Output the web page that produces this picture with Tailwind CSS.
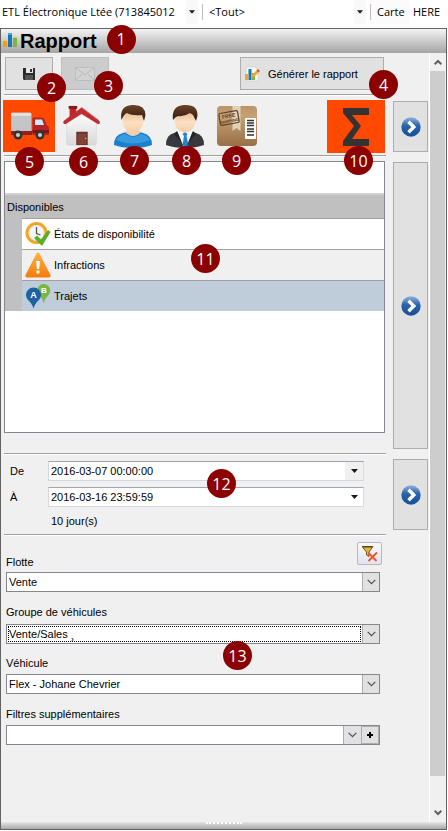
<!DOCTYPE html>
<html lang="fr">
<head>
  <meta charset="UTF-8">
  <meta name="viewport" content="width=device-width, initial-scale=1.0">
  <title>Rapport</title>
  <script src="https://cdn.jsdelivr.net/npm/@tailwindcss/browser@4"></script>
</head>
<body class="bg-white text-black font-['Liberation_Sans',Arial,sans-serif] text-[11px] leading-4 min-h-screen flex flex-col">
  <!-- Formes partagées -->
  <svg class="absolute size-0" aria-hidden="true">
    <defs>
      <linearGradient id="blueBall" x1="0" y1="0" x2="0" y2="1">
        <stop offset="0" stop-color="#8fb0dc"/><stop offset=".45" stop-color="#2862a8"/><stop offset="1" stop-color="#164f96"/>
      </linearGradient>
      <linearGradient id="skin" x1="0" y1="0" x2="0" y2="1">
        <stop offset="0" stop-color="#e9a878"/><stop offset=".6" stop-color="#fbe0c4"/><stop offset="1" stop-color="#f3cda4"/>
      </linearGradient>
      <linearGradient id="hair" x1="0" y1="0" x2="0" y2="1">
        <stop offset="0" stop-color="#6b4428"/><stop offset="1" stop-color="#2e190d"/>
      </linearGradient>
      <symbol id="next" viewBox="0 0 20 20">
        <circle cx="10" cy="10" r="9.7" fill="url(#blueBall)"/>
        <path d="M7.5 4.8 12.8 10l-5.3 5.2" fill="none" stroke="#fff" stroke-width="3.4"/>
      </symbol>
      <symbol id="chevron" viewBox="0 0 9 6">
        <path d="M.7 .9 4.5 4.7 8.3 .9" fill="none" stroke="#505050" stroke-width="1.2"/>
      </symbol>
      <symbol id="caret" viewBox="0 0 7 4"><path d="M0 0h7L3.5 4z" fill="#1a1a24"/></symbol>
    </defs>
  </svg>

  <!-- Barre du haut -->
  <div class="flex items-center h-6 font-['Open_Sans',sans-serif] mb-1 shrink-0">
    <div class="relative w-[202px] h-6 flex items-center">
      <select aria-label="Compagnie" class="appearance-none w-full h-full pl-0.5 pr-5 bg-white outline-none">
        <option>ETL Électronique Ltée (713845012</option>
      </select>
      <span class="absolute right-1 h-full w-3 bg-[#fafafa] pointer-events-none flex items-center justify-center"><svg class="w-[6px] h-1"><use href="#caret"/></svg></span>
    </div>
    <div class="w-px h-4 bg-[#bdbdbd]"></div>
    <div class="relative flex-1 h-6 flex items-center">
      <select aria-label="Flotte active" class="appearance-none w-full h-full pl-1.5 pr-6 bg-white outline-none">
        <option>&lt;Tout&gt;</option>
      </select>
      <span class="absolute right-1 h-full w-3 bg-[#fafafa] pointer-events-none flex items-center justify-center"><svg class="w-[6px] h-1"><use href="#caret"/></svg></span>
    </div>
    <div class="w-px h-4 bg-[#bdbdbd]"></div>
    <div class="bg-[#fbfbfb] h-6 pl-1.5 w-[38px] flex items-center">Carte</div>
    <div class="pl-1 w-[39px]">HERE</div>
  </div>

  <!-- Fenêtre du rapport -->
  <main class="flex-1 flex flex-col bg-[#f0f0f0] border border-[#636363] mr-px mb-px">
    <header class="h-6 flex items-center gap-0.5 bg-linear-to-b from-[#f4f4f4] to-[#a8a8a8] border-b border-[#a8a8a8]">
      <svg class="w-[15px] h-[15px] ml-0.5" viewBox="0 0 15 15">
        <path d="M0 7h4v7H0z" fill="#f59d18"/><path d="M0 7h4v1H0z" fill="#fbc96c"/>
        <path d="M5 0h4v14H5z" fill="#1477b8"/><path d="M5 0h4v2H5z" fill="#4aa4dc"/>
        <path d="M10 4h4v10h-4z" fill="#7cb342"/><path d="M10 4h4v1h-4z" fill="#b2d97e"/>
      </svg>
      <h1 class="font-bold text-[20px] leading-6">Rapport</h1>
      <div class="relative">
        <span class="absolute left-2 -top-4 z-10 size-[29px] rounded-full bg-[#8b0000] text-white font-['Open_Sans',sans-serif] text-base flex items-center justify-center">1</span>
      </div>
    </header>

    <div class="flex-1 flex">
      <div class="flex-1 min-w-0 pl-[3px] pr-px border-r border-white">
        <!-- Actions -->
        <div class="flex gap-2 pt-1 pl-px pr-11 h-[41px]">
          <button aria-label="Enregistrer" class="relative w-12 h-[33px] bg-[#e1e1e1] border border-[#adadad] flex items-center justify-center">
            <svg class="w-3 h-3" viewBox="0 0 12 12">
              <path d="M0 0h12v12H1L0 11z" fill="#2b2b2b"/><path d="M3 0h7v5H3z" fill="#e8e8e8"/><path d="M7 1h2v3H7z" fill="#333"/><path d="M2 7h8v5H2z" fill="#555"/>
            </svg>
            <span class="absolute left-[31px] top-[15px] z-10 size-[29px] rounded-full bg-[#8b0000] text-white font-['Open_Sans',sans-serif] text-base flex items-center justify-center">2</span>
          </button>
          <button aria-label="Envoyer" class="relative w-12 h-[33px] bg-[#cccccc] border border-[#bfbfbf] flex items-center justify-center">
            <svg class="w-5 h-[14px]" viewBox="0 0 20 14">
              <path d="M.5 .5h19v13H.5z" fill="#d3d3d3" stroke="#bdbdbd"/><path d="m1 1 9 7 9-7M1 13l6-6M19 13l-6-6" fill="none" stroke="#b8b8b8"/>
            </svg>
            <span class="absolute left-8 top-[13px] z-10 size-[29px] rounded-full bg-[#8b0000] text-white font-['Open_Sans',sans-serif] text-base flex items-center justify-center">3</span>
          </button>
          <button class="relative ml-auto w-36 h-[33px] bg-[#e1e1e1] border border-[#adadad] flex items-center gap-2 pl-[3px]">
            <svg class="w-4 h-4" viewBox="0 0 16 16">
              <path d="M2 1h9l3 3v11H2z" fill="#f7f7f7" stroke="#c8c8c8" stroke-width=".6"/>
              <path d="M1 8h3v6H1z" fill="#f5a623"/><path d="M4.500 3h3v11h-3z" fill="#1477b8"/><path d="M8 7h3v7H8z" fill="#7cb342"/>
              <path d="m7 12 1-3 5-5 2 2-5 5z" fill="#f2a33a"/><path d="m12.500 4.500 1.500-1.500 2 2-1.500 1.500z" fill="#d8553a"/>
            </svg>
            Générer le rapport
            <span class="absolute left-32 top-3 z-10 size-[29px] rounded-full bg-[#8b0000] text-white font-['Open_Sans',sans-serif] text-base flex items-center justify-center">4</span>
          </button>
        </div>
        <div class="border-t border-[#a0a0a0] h-0.5 bg-white mr-[42px]"></div>

        <!-- Type de rapport -->
        <div class="flex gap-[7px]">
          <div class="flex-1 min-w-0">
            <div class="flex h-[59px] pt-1 pr-px gap-[3px]">
              <button aria-label="Véhicules" class="relative w-[52px] h-[52px] -ml-px bg-[#ff4800] flex items-center justify-center">
                <svg class="w-10 h-10" viewBox="0 0 40 40">
                  <path d="M2 7.500q0-1 1-1h18q1.500 0 1.500 1.500v19H2z" fill="#c3c5c7"/><path d="M2 7h20v3H2z" fill="#dfe0e1"/>
                  <path d="M2 25h21v4H2z" fill="#8f2020"/>
                  <path d="M23.500 13q0-1.500 1.500-1.500h8q2 0 3 3l1.500 4.500q2.500 1 2.500 3v7H23.500z" fill="#b32428"/>
                  <path d="M26 13.500h7l2 5.500h-9z" fill="#ccebf8"/><path d="M23.500 24h16.500v3H23.500z" fill="#7c1518"/>
                  <circle cx="9" cy="29" r="4.500" fill="#333"/><circle cx="9" cy="29" r="2" fill="#cfcfcf"/>
                  <circle cx="31" cy="29" r="4.500" fill="#333"/><circle cx="31" cy="29" r="2" fill="#cfcfcf"/>
                </svg>
                <span class="absolute left-3 top-[47px] z-10 size-[29px] rounded-full bg-[#8b0000] text-white font-['Open_Sans',sans-serif] text-base flex items-center justify-center">5</span>
              </button>
              <button aria-label="Lieux" class="relative w-12 h-[52px] flex items-center justify-center">
                <svg class="w-[42px] h-[46px]" viewBox="0 0 44 46">
                  <defs><linearGradient id="wall" x1="0" y1="0" x2="0" y2="1"><stop offset="0" stop-color="#fff"/><stop offset="1" stop-color="#d9d9d9"/></linearGradient></defs>
                  <path d="M9 3h7v11H9z" fill="#b8282b"/><path d="M8 2h9v3H8z" fill="#8b1719"/>
                  <path d="M6 19 21 7l16 12v22q0 2-2 2H8q-2 0-2-2z" fill="url(#wall)" stroke="#ccc" stroke-width=".5"/>
                  <path d="M21.500 3.500 40.500 18q1 3-2 3L21.500 10.500 5 21q-4 0-2-3.500z" fill="#bd2d31"/>
                  <path d="M21.500 3.500 40 17.500" stroke="#d9595b"/>
                  <path d="M16 29h12v14H16z" fill="#6c332d"/><path d="M17.500 31h9v11h-9z" fill="#814239"/><circle cx="26" cy="36" r=".8" fill="#e7bc67"/>
                </svg>
                <span class="absolute left-[11px] top-[47px] z-10 size-[29px] rounded-full bg-[#8b0000] text-white font-['Open_Sans',sans-serif] text-base flex items-center justify-center">6</span>
              </button>
              <button aria-label="Personnes" class="relative w-12 h-[52px] flex items-center justify-center">
                <svg class="w-[42px] h-[46px]" viewBox="0 0 42 46">
                  <path d="M2 42q0-10 9-12l6-2h8l6 2q9 2 9 12-8 3-19 3T2 42z" fill="#1b80cb"/>
                  <path d="M4 37q3-5 9-6 8 6 16 0 6 1 9 6-17 7-34 0z" fill="#379be0"/>
                  <path d="M13 29q8 8 16 0l-4-3h-8z" fill="#f2cfac"/>
                  <ellipse cx="21" cy="17" rx="10.500" ry="12.500" fill="url(#skin)"/>
                  <path d="M9.500 17Q7 3 20 2q13-1 13.500 10l-1.500 6-2-6q-10 1-15-2-3 1-5.500 7z" fill="url(#hair)"/>
                </svg>
                <span class="absolute left-[11px] top-[46px] z-10 size-[29px] rounded-full bg-[#8b0000] text-white font-['Open_Sans',sans-serif] text-base flex items-center justify-center">7</span>
              </button>
              <button aria-label="Clients" class="relative w-[50px] h-[52px] flex items-center justify-center">
                <svg class="w-[42px] h-[46px]" viewBox="0 0 42 46">
                  <path d="M2 42q0-10 8-12l7-2h8l7 2q8 2 8 12-8 3-19 3T2 42z" fill="#38393c"/>
                  <path d="M13 28h16l-7 17h-2z" fill="#f4f7fa"/><path d="m18.500 31 2.500-2 2.500 2-1 2 2 9-3 3-3-3 1.500-9z" fill="#2186cd"/>
                  <path d="m13 28-3 3 7 8 3 6zM29 28l3 3-7 8-3 6z" fill="#222428"/>
                  <ellipse cx="21" cy="17" rx="10.500" ry="12.500" fill="url(#skin)"/>
                  <path d="M9 17Q7 3 20 2q14-1 13.500 11l-1.500 5-3-6-3-2q-6 4-12 3-3 1-5 4z" fill="url(#hair)"/>
                </svg>
                <span class="absolute left-3 top-[46px] z-10 size-[29px] rounded-full bg-[#8b0000] text-white font-['Open_Sans',sans-serif] text-base flex items-center justify-center">8</span>
              </button>
              <button aria-label="Livraisons" class="relative w-12 h-[52px] flex items-center justify-center">
                <svg class="w-10 h-[42px]" viewBox="0 0 40 42">
                  <defs><linearGradient id="box" x1="0" y1="0" x2="0" y2="1"><stop offset="0" stop-color="#b89468"/><stop offset=".25" stop-color="#c7a174"/><stop offset="1" stop-color="#996f45"/></linearGradient></defs>
                  <rect y="1" width="40" height="40" rx="4" fill="url(#box)"/>
                  <path d="M15.500 1h8v25l-4-3-4 3z" fill="#e2d2b4"/>
                  <g transform="rotate(-10 12 13)"><rect x="2.500" y="7" width="19" height="12" rx="1.500" fill="none" stroke="#5a4029" stroke-width="1.200"/>
                    <text x="12" y="12.500" text-anchor="middle" font-size="5" font-weight="bold" fill="#5a4029">FREE</text>
                    <text x="12" y="17.500" text-anchor="middle" font-size="4" font-weight="bold" fill="#5a4029">SHIPPING</text></g>
                  <rect x="28" y="13" width="11" height="21" rx="1" fill="#fff"/>
                  <path d="M30 15.500h7M30 18h7M30 20.500h7M30 24h7M30 26.500h7M30 30h7" stroke="#333" stroke-width="1.300"/>
                </svg>
                <span class="absolute left-[9px] top-[46px] z-10 size-[29px] rounded-full bg-[#8b0000] text-white font-['Open_Sans',sans-serif] text-base flex items-center justify-center">9</span>
              </button>
              <button aria-label="Sommaire" class="relative ml-auto w-[58px] h-[53px] bg-[#ff4800] flex items-center justify-center">
                <svg class="w-[26px] h-[38px]" viewBox="0 0 26 38"><path d="M0 0h26v7H9l9 11L9 31h17v7H0v-5l11-15L0 5z" fill="#333"/></svg>
                <span class="absolute left-[17px] top-[46px] z-10 size-[29px] rounded-full bg-[#8b0000] text-white font-['Open_Sans',sans-serif] text-base flex items-center justify-center">10</span>
              </button>
            </div>
            <div class="border-t border-[#a0a0a0] h-0.5 bg-white"></div>
          </div>
          <button aria-label="Suivant" class="w-[35px] h-[51px] mt-[5px] bg-[#e1e1e1] border border-[#adadad] flex items-center justify-center"><svg class="size-5"><use href="#next"/></svg></button>
        </div>

        <!-- Liste des rapports -->
        <div class="flex gap-[7px] pt-1">
          <div class="flex-1 min-w-0">
            <div class="relative h-[272px] bg-white border border-[#828790] mr-px">
              <div class="h-[31px]"></div>
              <div class="h-[25px] bg-[#c0c0c0] border-t-2 border-[#d2d2d2] pt-1 pl-0.5">
                <h2>Disponibles</h2>
              </div>
              <ul class="bg-[#c0c0c0] pl-[17px]">
                <li class="flex items-center gap-[3px] h-[31px] pl-[3px] bg-white border-t border-[#a0a0a0]">
                  <svg class="w-[26px] h-[26px]" viewBox="0 0 26 26">
                    <circle cx="11.500" cy="12" r="9.500" fill="#f7f7f7" stroke="#f3a51d" stroke-width="3"/><circle cx="11.500" cy="12" r="7.500" fill="none" stroke="#ccc" stroke-width=".6"/>
                    <path d="M11.500 6v6.500l4 1.500" fill="none" stroke="#555" stroke-width="1.300"/>
                    <path d="m9 17 3-2.500 4 4L23 9l2.500 2L17 25z" fill="#5cae28"/>
                  </svg>
                  États de disponibilité
                </li>
                <li class="flex items-center gap-[3px] h-[31px] pl-[3px] bg-[#f0f0f0] border-t border-[#a0a0a0]">
                  <svg class="w-[26px] h-[26px]" viewBox="0 0 26 26">
                    <defs><linearGradient id="warn" x1="0" y1="0" x2="0" y2="1"><stop offset="0" stop-color="#ffb343"/><stop offset="1" stop-color="#f47c0c"/></linearGradient></defs>
                    <path d="M11.500 1.500q1.500-2 3 0L25.500 23q.8 2.500-1.500 2.500H2Q-.3 25.500.5 23z" fill="url(#warn)"/>
                    <path d="M11.200 9h3.600l-.6 8h-2.400z" fill="#fff"/><circle cx="13" cy="20" r="1.700" fill="#fff"/>
                  </svg>
                  Infractions
                </li>
                <li class="flex items-center gap-[3px] h-[31px] pl-[3px] bg-[#bfcdda] border-t border-[#a0a0a0]">
                  <svg class="w-[26px] h-[26px]" viewBox="0 0 26 26">
                    <path d="M18.500 20q-1-5-4-7.500A6.500 6.500 0 1 1 23.500 12q-3 3-5 8z" fill="#79b648"/><text x="19" y="10" text-anchor="middle" font-size="8" font-weight="bold" fill="#fff">B</text>
                    <path d="M8.500 26q-1-5-5-8.500a7.500 7.500 0 1 1 10 0q-4 3.500-5 8.500z" fill="#1c62a4"/><text x="8.500" y="15" text-anchor="middle" font-size="9" font-weight="bold" fill="#fff">A</text>
                  </svg>
                  Trajets
                </li>
              </ul>
              <span class="absolute left-[186px] top-[82px] z-10 size-[29px] rounded-full bg-[#8b0000] text-white font-['Open_Sans',sans-serif] text-base flex items-center justify-center">11</span>
            </div>
            <div class="mt-5 border-t border-[#a0a0a0] h-0.5 bg-white"></div>
          </div>
          <button aria-label="Suivant" class="w-[35px] h-[287px] mt-px bg-[#e1e1e1] border border-[#adadad] flex items-center justify-center"><svg class="size-5"><use href="#next"/></svg></button>
        </div>

        <!-- Période -->
        <div class="flex gap-[7px]">
          <div class="relative flex-1 min-w-0">
            <div class="pt-1.5 pl-1.5 pr-[22px] flex flex-col gap-1.5">
              <div class="flex items-center h-5">
                <label for="de" class="w-[38px]">De</label>
                <div class="flex-1 h-5 flex border border-[#d5d8e0] border-t-[#a0a4b0]">
                  <input id="de" type="text" value="2016-03-07 00:00:00" class="flex-1 min-w-0 px-0.5 bg-white outline-none">
                  <button aria-label="Choisir la date de début" class="w-[18px] flex items-center justify-center"><svg class="w-[7px] h-1"><use href="#caret"/></svg></button>
                </div>
              </div>
              <div class="flex items-center h-5">
                <label for="a" class="w-[38px]">À</label>
                <div class="flex-1 h-5 flex bg-white border border-[#d5d8e0] border-t-[#a0a4b0]">
                  <input id="a" type="text" value="2016-03-16 23:59:59" class="flex-1 min-w-0 px-0.5 bg-white outline-none">
                  <button aria-label="Choisir la date de fin" class="w-[18px] flex items-center justify-center"><svg class="w-[7px] h-1"><use href="#caret"/></svg></button>
                </div>
              </div>
              <p class="pl-[41px]">10 jour(s)</p>
            </div>
            <span class="absolute left-[203px] top-3.5 z-10 size-[29px] rounded-full bg-[#8b0000] text-white font-['Open_Sans',sans-serif] text-base flex items-center justify-center">12</span>
            <div class="mt-[5px] border-t border-[#a0a0a0] h-0.5 bg-white"></div>
          </div>
          <button aria-label="Suivant" class="w-[35px] h-[71px] mt-1 bg-[#e1e1e1] border border-[#adadad] flex items-center justify-center"><svg class="size-5"><use href="#next"/></svg></button>
        </div>

        <!-- Filtres -->
        <div class="relative pl-0.5 pr-12 flex flex-col">
          <div class="flex justify-between pt-1.5 h-9">
            <label for="flotte" class="pt-3">Flotte</label>
            <button aria-label="Effacer les filtres" class="w-[25px] h-[23px] -mr-0.5 rounded-xs border border-[#b4b8c4] bg-linear-to-b from-[#f8f8fa] to-[#e2e4ec] flex items-center justify-center">
              <svg class="w-4 h-4" viewBox="0 0 16 16">
                <path d="M0 .5h11L7 6v4.500L4.500 9V6z" fill="#e5b73b" stroke="#5b4a20" stroke-width=".9"/><path d="M1 1h9" stroke="#4b3c18"/>
                <path d="m6.500 7 8 8M15 6.500 6.500 15" stroke="#f4502f" stroke-width="1.800"/>
              </svg>
            </button>
          </div>
          <div class="relative h-5 mb-2.5">
            <select id="flotte" class="appearance-none block w-full h-full pl-0.5 pr-5 bg-white border border-[#828790] outline-none"><option>Vente</option></select>
            <span class="absolute right-px top-px bottom-px w-[17px] bg-[#e1e1e1] border-l border-[#adadad] pointer-events-none flex items-center justify-center"><svg class="w-[9px] h-[6px]"><use href="#chevron"/></svg></span>
          </div>
          <label for="groupe" class="pt-0.5 mb-1">Groupe de véhicules</label>
          <div class="relative h-5 mb-2.5">
            <select id="groupe" class="appearance-none block w-full h-full pl-0.5 pr-5 bg-white border border-[#828790] outline-none"><option>Vente/Sales ¸</option></select>
            <span class="absolute left-0.5 right-[19px] top-0.5 bottom-0.5 border border-dotted border-black pointer-events-none"></span>
            <span class="absolute right-px top-px bottom-px w-[17px] bg-[#e1e1e1] border-l border-[#adadad] pointer-events-none flex items-center justify-center"><svg class="w-[9px] h-[6px]"><use href="#chevron"/></svg></span>
          </div>
          <label for="vehicule" class="pt-px mb-[3px]">Véhicule</label>
          <div class="relative h-5 mb-2.5">
            <select id="vehicule" class="appearance-none block w-full h-full pl-0.5 pr-5 bg-white border border-[#828790] outline-none"><option>Flex - Johane Chevrier</option></select>
            <span class="absolute right-px top-px bottom-px w-[17px] bg-[#e1e1e1] border-l border-[#adadad] pointer-events-none flex items-center justify-center"><svg class="w-[9px] h-[6px]"><use href="#chevron"/></svg></span>
          </div>
          <label for="filtres" class="pt-0.5 mb-[3px]">Filtres supplémentaires</label>
          <div class="flex h-5 border border-[#828790]">
            <div class="relative flex-1">
              <select id="filtres" class="appearance-none block w-full h-full pl-0.5 pr-5 bg-white outline-none"><option></option></select>
              <span class="absolute right-0 top-0 bottom-0 w-[18px] bg-[#e1e1e1] border-l border-[#adadad] pointer-events-none flex items-center justify-center"><svg class="w-[9px] h-[6px]"><use href="#chevron"/></svg></span>
            </div>
            <button aria-label="Ajouter un filtre" class="w-[18px] bg-[#e1e1e1] border border-[#adadad] flex items-center justify-center"><svg class="size-1.5" viewBox="0 0 6 6"><path d="M3 0v6M0 3h6" stroke="#000" stroke-width="2"/></svg></button>
          </div>
          <span class="absolute left-[219px] top-[105px] z-10 size-[29px] rounded-full bg-[#8b0000] text-white font-['Open_Sans',sans-serif] text-base flex items-center justify-center">13</span>
        </div>
      </div>

      <!-- Barre de défilement -->
      <div class="w-4 shrink-0 flex flex-col items-center pr-px">
        <button aria-label="Défiler vers le haut" class="h-[18px] flex items-center"><svg class="w-2 h-[7px]" viewBox="0 0 8 7"><path d="M.7 5.300 4 2l3.300 3.300" fill="none" stroke="#606060" stroke-width="2"/></svg></button>
        <div class="flex-1 w-full bg-[#cdcdcd]"></div>
        <button aria-label="Défiler vers le bas" class="h-[46px] flex items-end pb-1.5"><svg class="w-2 h-[7px]" viewBox="0 0 8 7"><path d="M.7 1.700 4 5l3.300-3.300" fill="none" stroke="#606060" stroke-width="2"/></svg></button>
      </div>
    </div>

    <!-- Poignée -->
    <footer class="h-[7px] bg-linear-to-b from-[#e6e6e6] to-[#a8a8a8] flex justify-center">
      <div class="w-9 h-[3px] border-t-2 border-dotted border-white"></div>
    </footer>
  </main>
</body>
</html>
